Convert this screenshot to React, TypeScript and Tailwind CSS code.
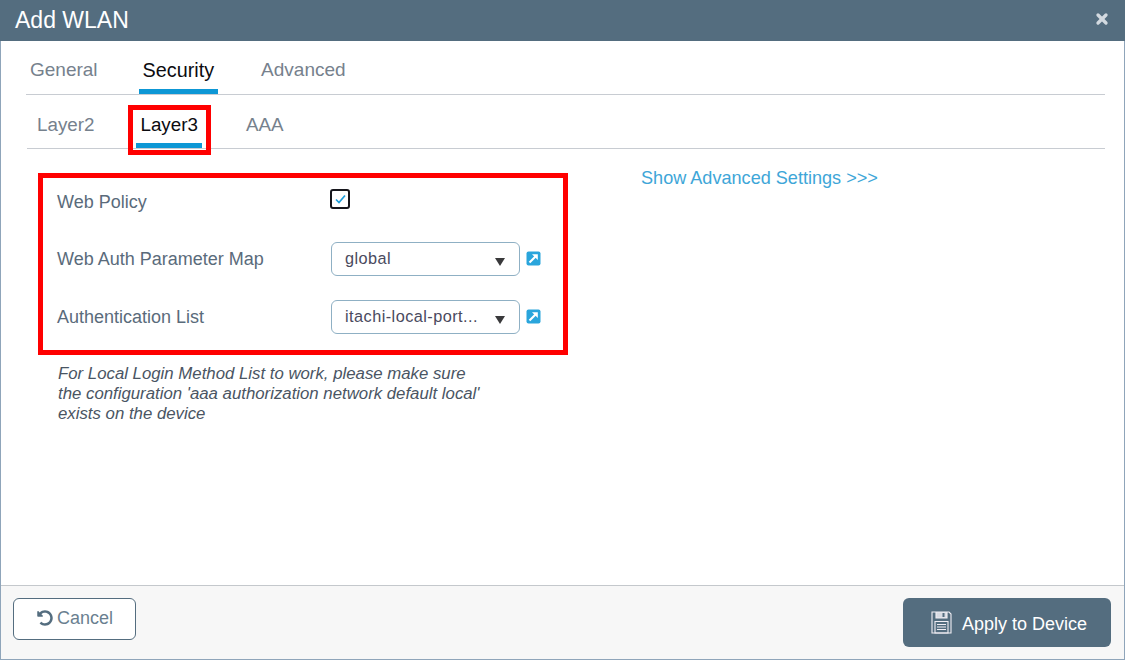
import type { ReactNode } from "react";
import { X } from "lucide-react";
import { FaUndoAlt } from "react-icons/fa";

const font = { fontFamily: '"Liberation Sans", Arial, sans-serif' };

function ExternalIcon() {
  return (
    <svg width="15" height="15" viewBox="0 0 15 15" className="ml-[6px] mt-[-1px] shrink-0">
      <rect x="0.5" y="0.5" width="14" height="14" rx="2" fill="#2aa5dc" />
      <path d="M3.5 11.5 L9.5 5.5" stroke="#fff" strokeWidth="2.2" fill="none" />
      <path d="M6 3.2 H11.8 V9 Z" fill="#fff" />
    </svg>
  );
}

function Select({ value }: { value: string }) {
  return (
    <div className="flex items-center">
      <div className="relative flex h-[34px] w-[189px] items-center rounded-[6px] border border-[#8fb0c4] bg-white pl-[13px]">
        <span className="pb-[1px] text-[16.3px] tracking-[0.45px] text-[#4a4a5e]">{value}</span>
        <span className="absolute right-[14px] top-[15px] h-0 w-0 border-x-[5px] border-t-[8px] border-x-transparent border-t-[#39393b]" />
      </div>
      <ExternalIcon />
    </div>
  );
}

function Row({ label, children, className }: { label: string; children: ReactNode; className: string }) {
  return (
    <div className={"flex items-center " + className}>
      <div className="w-[274px] text-[18px] text-[#5a6b7b]">{label}</div>
      {children}
    </div>
  );
}

export default function App() {
  return (
    <div style={font} className="flex h-[660px] w-[1125px] flex-col border-x border-b border-[#8fa5ba] bg-white">
      <div className="mx-[-1px] flex h-[41px] shrink-0 items-center justify-between bg-[#546d7f] pl-[15px] pr-[15px]">
        <span className="text-[23px] text-white">Add WLAN</span>
        <X size={16} strokeWidth={5} className="mb-[3px] text-[#d3dae0]" />
      </div>

      <div className="flex-1 pl-[25px] pr-[19px]">
        <div className="flex h-[54px] items-end border-b border-[#c8ccd2] pl-[4px] text-[19px] leading-[28px] text-[#76818d]">
          <div className="pb-[10px]">General</div>
          <div className="ml-[41px] border-b-[5px] border-[#0d97d5] px-[4px] pb-[5px] text-[19.8px] text-[#0b0b0f]">Security</div>
          <div className="ml-[43px] pb-[10px]">Advanced</div>
        </div>

        <div className="ml-[1px] flex h-[54px] items-end border-b border-[#c8ccd2] pl-[10px] text-[18.8px] leading-[28px] text-[#76818d]">
          <div className="pb-[9px]">Layer2</div>
          <div className="relative ml-[42px] mr-[44px] border-b-[5px] border-[#0d97d5] px-[4px] pb-[4px] text-[#0b0b0f]">
            Layer3
            <span className="absolute bottom-[-12px] left-[-8px] right-[-9px] top-[-6px] border-[5px] border-[#ff0000]" />
          </div>
          <div className="pb-[9px]">AAA</div>
        </div>

        <div className="flex items-start">
          <div className="ml-[12px] w-[530px]">
            <div className="mt-[24px] h-[182px] border-[5px] border-[#ff0000] pl-[14px]">
              <Row label="Web Policy" className="mt-[11px] h-[26px]">
                <div className="ml-[-1px] mt-[-6px] flex h-[20px] w-[20px] items-center justify-center rounded-[3px] border-2 border-[#16161c]">
                  <svg width="11" height="10" viewBox="0 0 11 10">
                    <path d="M1 5.5 L4 8.5 L10 1.5" stroke="#1f9fdc" strokeWidth="1.7" fill="none" />
                  </svg>
                </div>
              </Row>
              <Row label="Web Auth Parameter Map" className="mt-[27px]">
                <Select value="global" />
              </Row>
              <Row label="Authentication List" className="mt-[24px]">
                <Select value="itachi-local-port..." />
              </Row>
            </div>
            <div className="ml-[20px] mt-[9px] text-[16.8px] italic leading-[20px] text-[#4a5563]">
              For Local Login Method List to work, please make sure
              <br />
              the configuration 'aaa authorization network default local'
              <br />
              exists on the device
            </div>
          </div>
          <div className="ml-[73px] mt-[16px] text-[18.1px] text-[#3ea6d8]">Show Advanced Settings &gt;&gt;&gt;</div>
        </div>
      </div>

      <div className="flex h-[74px] shrink-0 items-start justify-between border-t border-[#c4c8cc] bg-[#f7f7f7] pl-[12px] pr-[13px] pt-[12px]">
        <button className="flex h-[42px] w-[123px] items-center justify-center gap-[4px] rounded-[6px] border border-[#546d7f] bg-white pb-[2px] pl-[1px] text-[18px] text-[#6a7f90]">
          <FaUndoAlt size={16} className="text-[#546d7f]" />
          Cancel
        </button>
        <button className="flex h-[49px] w-[208px] items-center gap-[10px] rounded-[6px] bg-[#546d7f] pl-[28px] text-[18px] text-white">
          <svg width="21" height="23" viewBox="0 0 21 23" fill="none" stroke="#f0eef4" strokeWidth="1.1">
            <path d="M1 1 H18 L20 3 V22 H1 Z" />
            <path d="M5 1 V7 H16 V1" fill="#f0eef4" fillOpacity="0.85" />
            <path d="M12.5 2 V6" stroke="#546d7f" strokeWidth="2" />
            <path d="M4 10.5 H17 V22 H4 Z" />
            <path d="M6 13.5 H15 M6 16 H15 M6 18.5 H15" />
          </svg>
          <span className="pt-[4px]">Apply to Device</span>
        </button>
      </div>
    </div>
  );
}
